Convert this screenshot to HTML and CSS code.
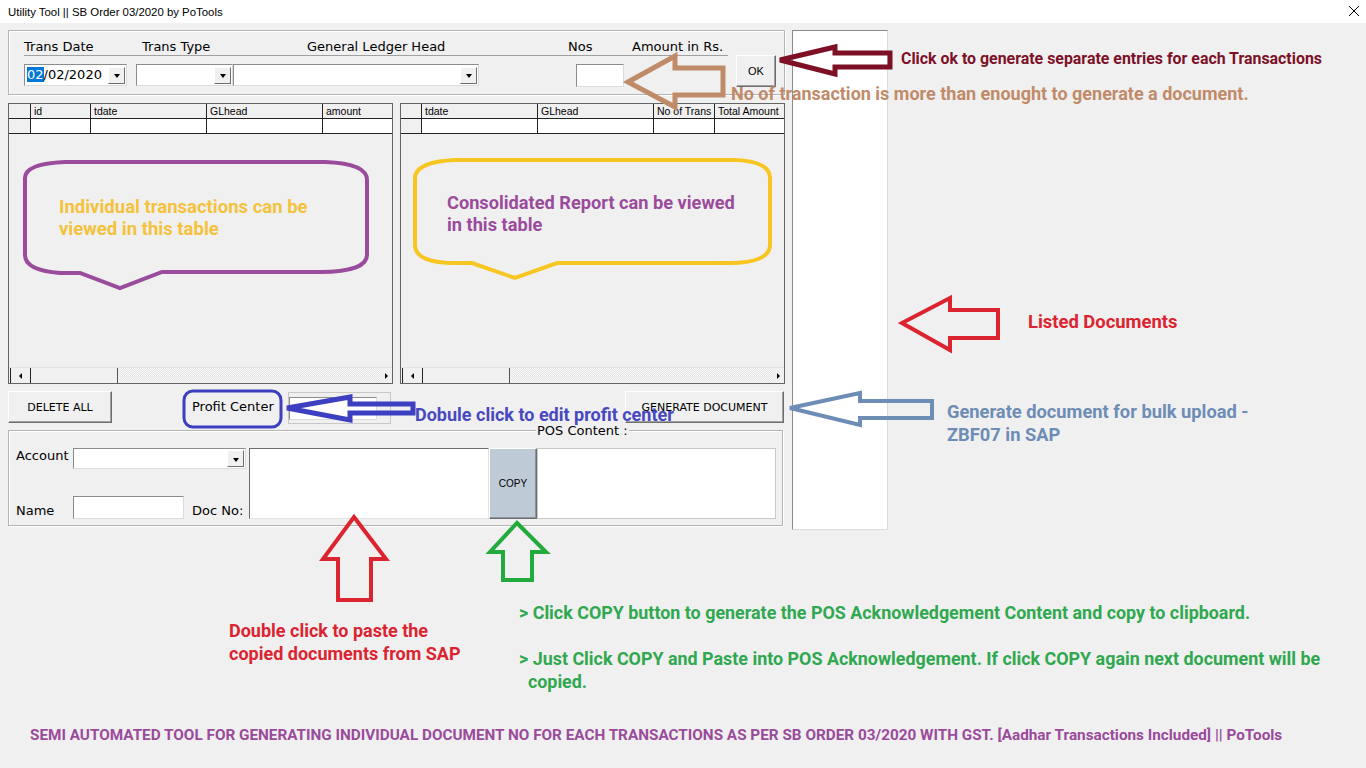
FILE: index.html
```html
<!DOCTYPE html>
<html>
<head>
<meta charset="utf-8">
<title>Utility Tool</title>
<link rel="stylesheet" href="styles.css">
</head>
<body>
<div class="window">
  <div class="titlebar">
    <span class="title">Utility Tool || SB Order 03/2020 by PoTools</span>
    <svg class="close" width="12" height="12" viewBox="0 0 12 12"><path d="M1 1 L11 11 M11 1 L1 11" stroke="#000" stroke-width="1" fill="none"/></svg>
  </div>

  <div class="client">
    <div class="leftcol">
      <div class="frame topframe">
        <div class="entry">
          <div class="labels">
            <span class="l-date">Trans Date</span>
            <span class="l-type">Trans Type</span>
            <span class="l-gl">General Ledger Head</span>
            <span class="l-nos">Nos</span>
            <span class="l-amt">Amount in Rs.</span>
          </div>
          <div class="inputs">
            <div class="combo c-date"><span class="val"><span class="sel">02</span>/02/2020</span><span class="drop"></span></div>
            <div class="combo c-type"><span class="val"></span><span class="drop"></span></div>
            <div class="combo c-gl"><span class="val"></span><span class="drop"></span></div>
            <div class="sunken t-nos"></div>
          </div>
        </div>
        <div class="btn ok">OK</div>
      </div>

      <div class="grids">
        <div class="grid">
          <div class="grow head">
            <span class="cell sel-c w22"></span>
            <span class="cell w60">id</span>
            <span class="cell w116">tdate</span>
            <span class="cell w116">GLhead</span>
            <span class="cell w69 last">amount</span>
          </div>
          <div class="grow data">
            <span class="cell sel-c w22"></span>
            <span class="cell w60"></span>
            <span class="cell w116"></span>
            <span class="cell w116"></span>
            <span class="cell w69 last"></span>
          </div>
          <div class="gbody"></div>
          <div class="hscroll">
            <span class="sb-l"><i class="tri-l"></i></span>
            <span class="sb-thumb t-left"></span>
            <span class="sb-track"></span>
            <span class="sb-r"><i class="tri-r"></i></span>
          </div>
        </div>
        <div class="grid">
          <div class="grow head">
            <span class="cell sel-c w21"></span>
            <span class="cell w116">tdate</span>
            <span class="cell w116">GLhead</span>
            <span class="cell w61">No of Trans</span>
            <span class="cell w69 last">Total Amount</span>
          </div>
          <div class="grow data">
            <span class="cell sel-c w21"></span>
            <span class="cell w116"></span>
            <span class="cell w116"></span>
            <span class="cell w61"></span>
            <span class="cell w69 last"></span>
          </div>
          <div class="gbody"></div>
          <div class="hscroll">
            <span class="sb-l"><i class="tri-l"></i></span>
            <span class="sb-thumb t-right"></span>
            <span class="sb-track"></span>
            <span class="sb-r"><i class="tri-r"></i></span>
          </div>
        </div>
      </div>

      <div class="actions">
        <div class="btn delete">DELETE ALL</div>
        <span class="pc-label">Profit Center</span>
        <div class="pc-frame"><div class="sunken pc-box"></div></div>
        <div class="btn generate">GENERATE DOCUMENT</div>
      </div>

      <div class="frame posframe">
        <span class="caption">POS Content :</span>
        <div class="pos-left">
          <div class="row r-acc">
            <span class="lbl">Account</span>
            <div class="combo c-acc"><span class="val"></span><span class="drop"></span></div>
          </div>
          <div class="row r-name">
            <span class="lbl">Name</span>
            <div class="sunken t-name"></div>
            <span class="lbl docno">Doc No:</span>
          </div>
        </div>
        <div class="sunken doc"></div>
        <div class="btn copy">COPY</div>
        <div class="sunken pos"></div>
      </div>
    </div>
    <div class="listbox"></div>
  </div>

  <svg class="overlay" width="1366" height="768" viewBox="0 0 1366 768">
    <g fill="none" stroke-linejoin="miter">
      <polygon points="780,60 835,47 835,53 890,53 890,67 835,67 835,74" stroke="#7d1024" stroke-width="5"/>
      <polygon points="628,82 675,56 675,68 723,68 723,95 675,95 675,107" stroke="#c08b69" stroke-width="5"/>
      <path d="M 65 162 L 325 162 C 355 163 367 170 367 180 L 367 255 C 367 266 350 272 320 272 L 162 272 L 120 288 L 80 273 L 60 273 C 35 271 25 264 25 255 L 25 178 C 25 168 40 163 65 162 Z" stroke="#9a4b9c" stroke-width="4"/>
      <path d="M 455 160 L 735 160 C 760 161 770 168 770 178 L 770 245 C 770 257 755 263 730 263 L 557 263 L 515 278 L 472 263 L 450 263 C 425 262 415 255 415 245 L 415 178 C 415 168 428 161 455 160 Z" stroke="#f7c623" stroke-width="4"/>
      <polygon points="902,323 950,298 950,310 998,310 998,338 950,338 950,350" stroke="#dc2430" stroke-width="4"/>
      <polygon points="790,408 860,393 860,401 932,401 932,418 860,418 860,425" stroke="#6d8db6" stroke-width="4"/>
      <rect x="184" y="391" width="97" height="36" rx="9" ry="9" stroke="#3b3fc0" stroke-width="3"/>
      <polygon points="287,408 350,397 350,404 413,404 413,413 350,413 350,420" stroke="#3b3fc0" stroke-width="5"/>
      <polygon points="354,517 386,559 371,559 371,600 338,600 338,559 323,559" stroke="#dc2430" stroke-width="4"/>
      <polygon points="517,523 546,552 532,552 532,580 503,580 503,552 490,552" stroke="#22aa3c" stroke-width="4"/>
    </g>
  </svg>

  <div class="note n-ok">Click ok to generate separate entries for each Transactions</div>
  <div class="note n-nos">No of transaction is more than enought to generate a document.</div>
  <div class="note n-ind">Individual transactions can be<br>viewed in this table</div>
  <div class="note n-cons">Consolidated Report can be viewed<br>in this table</div>
  <div class="note n-list">Listed Documents</div>
  <div class="note n-gen">Generate document for bulk upload -<br>ZBF07 in SAP</div>
  <div class="note n-pc">Dobule click to edit profit center</div>
  <div class="note n-paste">Double click to paste the<br>copied documents from SAP</div>
  <div class="note n-copy">
    <p>&gt; Click COPY button to generate the POS Acknowledgement Content and copy to clipboard.</p>
    <p>&gt; Just Click COPY and Paste into POS Acknowledgement. If click COPY again next document will be<br>&nbsp;&nbsp;copied.</p>
  </div>
  <div class="note n-foot">SEMI AUTOMATED TOOL FOR GENERATING INDIVIDUAL DOCUMENT NO FOR EACH TRANSACTIONS AS PER SB ORDER 03/2020 WITH GST. [Aadhar Transactions Included] || PoTools</div>
</div>
</body>
</html>
```

FILE: styles.css
```css
* { box-sizing: border-box; }
html, body { margin: 0; padding: 0; }
body {
  width: 1366px;
  height: 768px;
  overflow: hidden;
  background: #f0f0f0;
  font-family: "DejaVu Sans", Verdana, sans-serif;
  font-size: 13px;
  color: #000;
}
.window { position: relative; width: 1366px; height: 768px; }

/* title bar */
.titlebar {
  height: 23px;
  background: #fff;
  display: flex;
  align-items: center;
  justify-content: space-between;
  padding: 0 6px 0 8px;
  font-family: "Liberation Sans", Arial, sans-serif;
  font-size: 11.4px;
}
.close { margin-top: -2px; }

/* client area */
.client {
  display: flex;
  gap: 7px;
  padding: 7px 0 0 8px;
  align-items: flex-start;
}
.leftcol { width: 777px; display: flex; flex-direction: column; }
.frame {
  border: 1px solid #b4b4b4;
  box-shadow: inset 1px 1px 0 #fff, 1px 1px 0 #fff;
}

/* top frame */
.topframe { height: 65px; display: flex; padding: 8px 0 0 15px; }
.entry { width: 704px; }
.labels {
  display: flex;
  height: 17px;
  line-height: 16px;
  border-bottom: 1px solid #a0a0a0;
  white-space: nowrap;
}
.l-date { width: 118px; }
.l-type { width: 165px; }
.l-gl { width: 261px; }
.l-nos { width: 64px; }
.inputs { display: flex; margin-top: 8px; align-items: flex-start; }

.sunken {
  background: #fff;
  border: 1px solid;
  border-color: #8c8c8c #dcdcdc #dcdcdc #8c8c8c;
}
.combo {
  display: flex;
  align-items: center;
  height: 22px;
  background: #fff;
  border: 1px solid;
  border-color: #8c8c8c #dcdcdc #dcdcdc #8c8c8c;
}
.combo .val { flex: 1; padding-left: 2px; line-height: 18px; white-space: nowrap; }
.combo .sel { background: #0078d7; color: #fff; }
.combo .drop {
  width: 17px;
  height: 17px;
  margin-right: 1px;
  background: #f0f0f0;
  border: 1px solid;
  border-color: #fff #6e6e6e #6e6e6e #fff;
  display: flex;
  align-items: center;
  justify-content: center;
}
.combo .drop::after {
  content: "";
  border-left: 3.5px solid transparent;
  border-right: 3.5px solid transparent;
  border-top: 4px solid #000;
  margin-top: 2px;
}
.c-date { width: 103px; margin-right: 9px; }
.c-type { width: 97px; margin-right: 0; }
.c-gl { width: 246px; }
.t-nos { width: 48px; height: 23px; margin-left: 97px; }

.btn {
  background: #f0f0f0;
  border: 1px solid;
  border-color: #fff #6e6e6e #6e6e6e #fff;
  box-shadow: inset -1px -1px 0 #a0a0a0;
  display: flex;
  align-items: center;
  justify-content: center;
  white-space: nowrap;
}
.ok {
  width: 40px;
  height: 32px;
  margin: 16px 0 0 8px;
  font-family: "Liberation Sans", Arial, sans-serif;
  font-size: 11px;
}

/* grids */
.grids { display: flex; gap: 7px; margin-top: 8px; }
.grid {
  width: 385px;
  height: 281px;
  border: 1px solid #646464;
  background: #f0f0f0;
  display: flex;
  flex-direction: column;
}
.grow { display: flex; height: 15px; border-bottom: 1px solid #222; }
.cell {
  display: block;
  height: 14px;
  border-right: 1px solid #222;
  padding-left: 3px;
  font-family: "Liberation Sans", Arial, sans-serif;
  font-size: 10.5px;
  line-height: 14px;
  white-space: nowrap;
  overflow: hidden;
}
.cell.last { border-right: 0; }
.head .cell { background: #f0f0f0; }
.data .cell { background: #fff; }
.data .cell.sel-c, .head .cell.sel-c { background: #f0f0f0; }
.w21 { width: 21px; }
.w22 { width: 22px; }
.w60 { width: 60px; }
.w61 { width: 61px; }
.w69 { width: 69px; }
.w116 { width: 116px; }
.gbody { flex: 1; }
.hscroll { display: flex; height: 16px; border-top: 1px solid #e3e3e3; }
.sb-l {
  width: 21px;
  border-left: 1px solid #222;
  border-right: 1px solid #222;
  margin-left: 1px;
  display: flex;
  align-items: center;
  justify-content: center;
  background: #f0f0f0;
}
.sb-thumb { background: #f0f0f0; border-right: 1px solid #555; }
.t-left { width: 87px; }
.t-right { width: 87px; }
.sb-track {
  flex: 1;
  background: repeating-conic-gradient(#e2e2e2 0 25%, #fbfbfb 0 50%) 0 0 / 2px 2px;
}
.sb-r {
  width: 12px;
  display: flex;
  align-items: center;
  justify-content: center;
  background: #f0f0f0;
}
.tri-l { border-top: 3px solid transparent; border-bottom: 3px solid transparent; border-right: 3px solid #000; }
.tri-r { border-top: 3px solid transparent; border-bottom: 3px solid transparent; border-left: 3px solid #000; }

/* actions row */
.actions { display: flex; margin-top: 7px; height: 33px; align-items: flex-start; }
.delete { width: 104px; height: 32px; font-size: 11px; }
.pc-label { width: 96px; margin-left: 80px; line-height: 32px; white-space: nowrap; }
.pc-frame {
  width: 103px;
  height: 32px;
  margin-top: 1px;
  border: 1px solid #c8c8c8;
  padding: 4px 0 0 0;
}
.pc-box { width: 88px; height: 23px; }
.generate { width: 159px; height: 32px; margin-left: auto; margin-right: 1px; font-size: 11px; }

/* POS frame */
.posframe {
  position: relative;
  width: 775px;
  height: 96px;
  margin-top: 6px;
  display: flex;
  align-items: flex-start;
  padding: 17px 0 0 7px;
}
.caption {
  position: absolute;
  left: 527px;
  top: -8px;
  line-height: 15px;
  background: #f0f0f0;
  padding: 0 1px;
  white-space: nowrap;
}
.pos-left { width: 233px; }
.row { display: flex; align-items: flex-start; }
.lbl { width: 57px; line-height: 15px; white-space: nowrap; }
.r-acc .lbl { margin-top: 0; }
.c-acc { width: 173px; height: 21px; }
.r-name { margin-top: 27px; }
.r-name .lbl { margin-top: 7px; }
.t-name { width: 111px; height: 23px; }
.docno { margin-left: 8px; width: auto; }
.doc { width: 240px; height: 71px; border-color: #6e6e6e #e3e3e3 #e3e3e3 #6e6e6e; }
.copy {
  width: 48px;
  height: 71px;
  background: #bfcad7;
  font-family: "Liberation Sans", Arial, sans-serif;
  font-size: 10px;
  box-shadow: inset -1px -1px 0 #8a949e;
}
.pos { width: 239px; height: 71px; border-color: #c8c8c8; }

/* list box */
.listbox {
  width: 96px;
  height: 500px;
  background: #fff;
  border: 1px solid;
  border-color: #8c8c8c #dcdcdc #dcdcdc #8c8c8c;
}

/* annotation overlay */
.overlay { position: absolute; left: 0; top: 0; pointer-events: none; }
.note {
  position: absolute;
  font-family: Roboto, "Liberation Sans", sans-serif;
  font-weight: 700;
  white-space: nowrap;
}
.n-ok { left: 901px; top: 50px; font-size: 15.9px; line-height: 18px; color: #7d1128; }
.n-nos { left: 731px; top: 83px; font-size: 18px; line-height: 22px; color: #c08b69; }
.n-ind { left: 59px; top: 196px; font-size: 18.5px; line-height: 22px; color: #f4c23c; }
.n-cons { left: 447px; top: 192px; font-size: 18.2px; line-height: 22px; color: #9a4b9c; }
.n-list { left: 1028px; top: 311px; font-size: 18.4px; line-height: 22px; color: #dc2430; }
.n-gen { left: 947px; top: 400px; font-size: 18.3px; line-height: 23px; color: #6d8db6; }
.n-pc { left: 415px; top: 404px; font-size: 18px; line-height: 22px; color: #4848c0; }
.n-paste { left: 229px; top: 619px; font-size: 18px; line-height: 23px; color: #dc2430; }
.n-copy { left: 519px; top: 601px; font-size: 17.9px; line-height: 23px; color: #2fa84f; }
.n-copy p { margin: 0 0 23px 0; }
.n-foot { left: 30px; top: 725px; font-size: 15.3px; line-height: 20px; color: #9a4b9c; }
```
